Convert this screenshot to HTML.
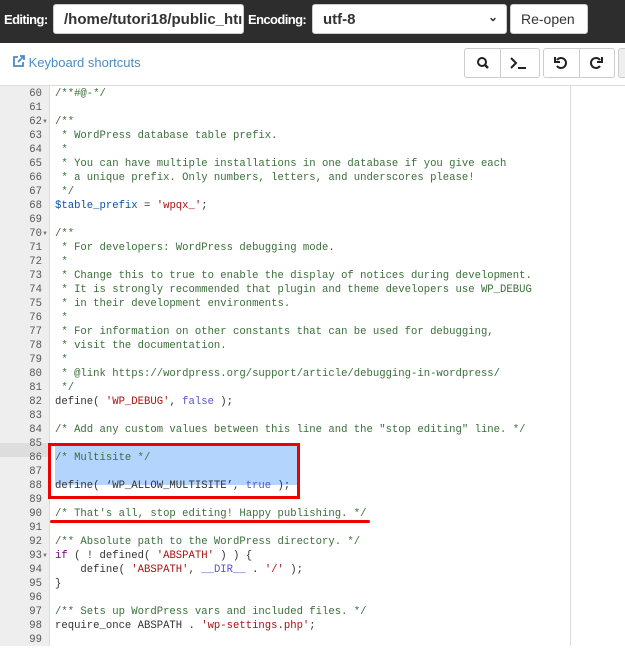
<!DOCTYPE html>
<html><head><style>
*{margin:0;padding:0;box-sizing:border-box}
body{width:625px;height:648px;overflow:hidden;background:#fff;font-family:"Liberation Sans",sans-serif;position:relative}
.top{position:absolute;left:0;top:0;width:625px;height:43px;background:#2d2d2d}
.lbl{position:absolute;color:#fff;font-weight:bold;font-size:13px;top:12px;letter-spacing:-0.6px}
.inp{position:absolute;background:#fff;border:1px solid #ccc;border-radius:3px;top:4px;height:30px;font-size:15px;color:#333;padding:6px 10px}
.tb{position:absolute;top:48px;height:30px;border:1px solid #ccc;border-radius:3px;background:#fff}
.code{position:absolute;left:0;top:85px;width:625px;height:563px;border-top:1px solid #ddd}
.gut{position:absolute;left:0;top:0;width:50px;height:560px;background:#eee;border-right:1px solid #ddd}
.ln{position:absolute;left:0;width:42px;text-align:right;font:10.6px/14px "Liberation Mono",monospace;color:#555}
.fa{position:absolute;left:42px;font-size:6px;line-height:14px;color:#777}
.cl{position:absolute;left:55px;font:10.6px/14px "Liberation Mono",monospace;color:#333;white-space:pre}
.c{color:#3a6f3a}.s{color:#a11}.k{color:#708}.v{color:#05a}.a{color:#55c}
</style></head><body>
<div class="top">
<div class="lbl" style="left:4px">Editing:</div>
<div class="inp" style="left:53px;width:191px;font-weight:bold">/home/tutori18/public_htı</div>
<div class="lbl" style="left:248px">Encoding:</div>
<div class="inp" style="left:312px;width:195px;font-weight:bold">utf-8<span style="position:absolute;right:8px;top:5px;font-size:12px">⌄</span></div>
<div class="inp" style="left:510px;width:78px;font-size:14px">Re-open</div>
</div>
<div style="position:absolute;left:12px;top:55px;font-size:13px;color:#4a8bc2">
<svg width="13" height="13" viewBox="0 0 13 13" style="vertical-align:-1px"><path d="M6 2H2v9h9V7" fill="none" stroke="#4a8bc2" stroke-width="1.8"/><path d="M6 7l6-6M8 1h4v4" fill="none" stroke="#4a8bc2" stroke-width="1.8"/></svg> Keyboard shortcuts</div>
<div class="tb" style="left:464px;width:76px"></div>
<div style="position:absolute;left:500px;top:48px;width:1px;height:30px;background:#ccc"></div>
<div class="tb" style="left:543px;width:72px"></div>
<div style="position:absolute;left:579px;top:48px;width:1px;height:30px;background:#ccc"></div>
<div class="tb" style="left:618px;width:20px;background:#eee"></div>
<svg style="position:absolute;left:475px;top:55px" width="16" height="16" viewBox="0 0 16 16"><circle cx="7" cy="7" r="4" fill="none" stroke="#222" stroke-width="2"/><path d="M10 10l3 3" stroke="#222" stroke-width="2.4"/></svg>
<svg style="position:absolute;left:509px;top:55px" width="20" height="16" viewBox="0 0 20 16"><path d="M2 3l5 5-5 5" fill="none" stroke="#222" stroke-width="2"/><path d="M9 13h8" stroke="#222" stroke-width="2"/></svg>
<svg style="position:absolute;left:553px;top:55px" width="16" height="16" viewBox="0 0 16 16"><path d="M4 5a5 5 0 1 1 0 6" fill="none" stroke="#222" stroke-width="2"/><path d="M2 2v5h5" fill="none" stroke="#222" stroke-width="2"/></svg>
<svg style="position:absolute;left:588px;top:55px" width="16" height="16" viewBox="0 0 16 16"><path d="M12 5a5 5 0 1 0 0 6" fill="none" stroke="#222" stroke-width="2"/><path d="M14 2v5H9" fill="none" stroke="#222" stroke-width="2"/></svg>
<div class="code">
<div class="gut"></div>
<div style="position:absolute;left:0;top:357px;width:50px;height:14px;background:#ddd"></div>
<div style="position:absolute;left:570px;top:0;width:1px;height:560px;background:#ddd"></div>
<div style="position:absolute;left:55px;top:357px;width:245px;height:42px;background:#b3d4fc"></div>
</div>
<div style="position:absolute;left:48px;top:443px;width:252px;height:56px;border:3px solid #e00"></div>
<div style="position:absolute;left:50px;top:520px;width:320px;height:3px;background:#e00;border-radius:2px"></div>
<div id="L"></div>
<script>
var lines=[
['60','<span class="c">/**#@-*/</span>'],['61',''],['62▾','<span class="c">/**</span>'],
['63','<span class="c"> * WordPress database table prefix.</span>'],['64','<span class="c"> *</span>'],
['65','<span class="c"> * You can have multiple installations in one database if you give each</span>'],
['66','<span class="c"> * a unique prefix. Only numbers, letters, and underscores please!</span>'],
['67','<span class="c"> */</span>'],['68','<span class="v">$table_prefix</span> = <span class="s">\'wpqx_\'</span>;'],['69',''],
['70▾','<span class="c">/**</span>'],['71','<span class="c"> * For developers: WordPress debugging mode.</span>'],['72','<span class="c"> *</span>'],
['73','<span class="c"> * Change this to true to enable the display of notices during development.</span>'],
['74','<span class="c"> * It is strongly recommended that plugin and theme developers use WP_DEBUG</span>'],
['75','<span class="c"> * in their development environments.</span>'],['76','<span class="c"> *</span>'],
['77','<span class="c"> * For information on other constants that can be used for debugging,</span>'],
['78','<span class="c"> * visit the documentation.</span>'],['79','<span class="c"> *</span>'],
['80','<span class="c"> * @link https://wordpress.org/support/article/debugging-in-wordpress/</span>'],
['81','<span class="c"> */</span>'],['82','define( <span class="s">\'WP_DEBUG\'</span>, <span class="a">false</span> );'],['83',''],
['84','<span class="c">/* Add any custom values between this line and the "stop editing" line. */</span>'],['85',''],
['86','<span class="c">/* Multisite */</span>'],['87',''],['88','define( ‘WP_ALLOW_MULTISITE’, <span class="a">true</span> );'],['89',''],
['90','<span class="c">/* That\'s all, stop editing! Happy publishing. */</span>'],['91',''],
['92','<span class="c">/** Absolute path to the WordPress directory. */</span>'],
['93▾','<span class="k">if</span> ( ! defined( <span class="s">\'ABSPATH\'</span> ) ) {'],
['94','    define( <span class="s">\'ABSPATH\'</span>, <span class="a">__DIR__</span> . <span class="s">\'/\'</span> );'],['95','}'],['96',''],
['97','<span class="c">/** Sets up WordPress vars and included files. */</span>'],
['98','require_once ABSPATH . <span class="s">\'wp-settings.php\'</span>;'],['99','']];
var h='';lines.forEach(function(l,i){var t=87+i*14;var f=l[0].indexOf('▾')>=0;var n=l[0].replace('▾','');
h+='<div class="ln" style="top:'+t+'px">'+n+'</div>'+(f?'<div class="fa" style="top:'+t+'px">▼</div>':'')+'<div class="cl" style="top:'+t+'px">'+l[1]+'</div>';});
document.getElementById('L').innerHTML=h;
</script>
</body></html>
